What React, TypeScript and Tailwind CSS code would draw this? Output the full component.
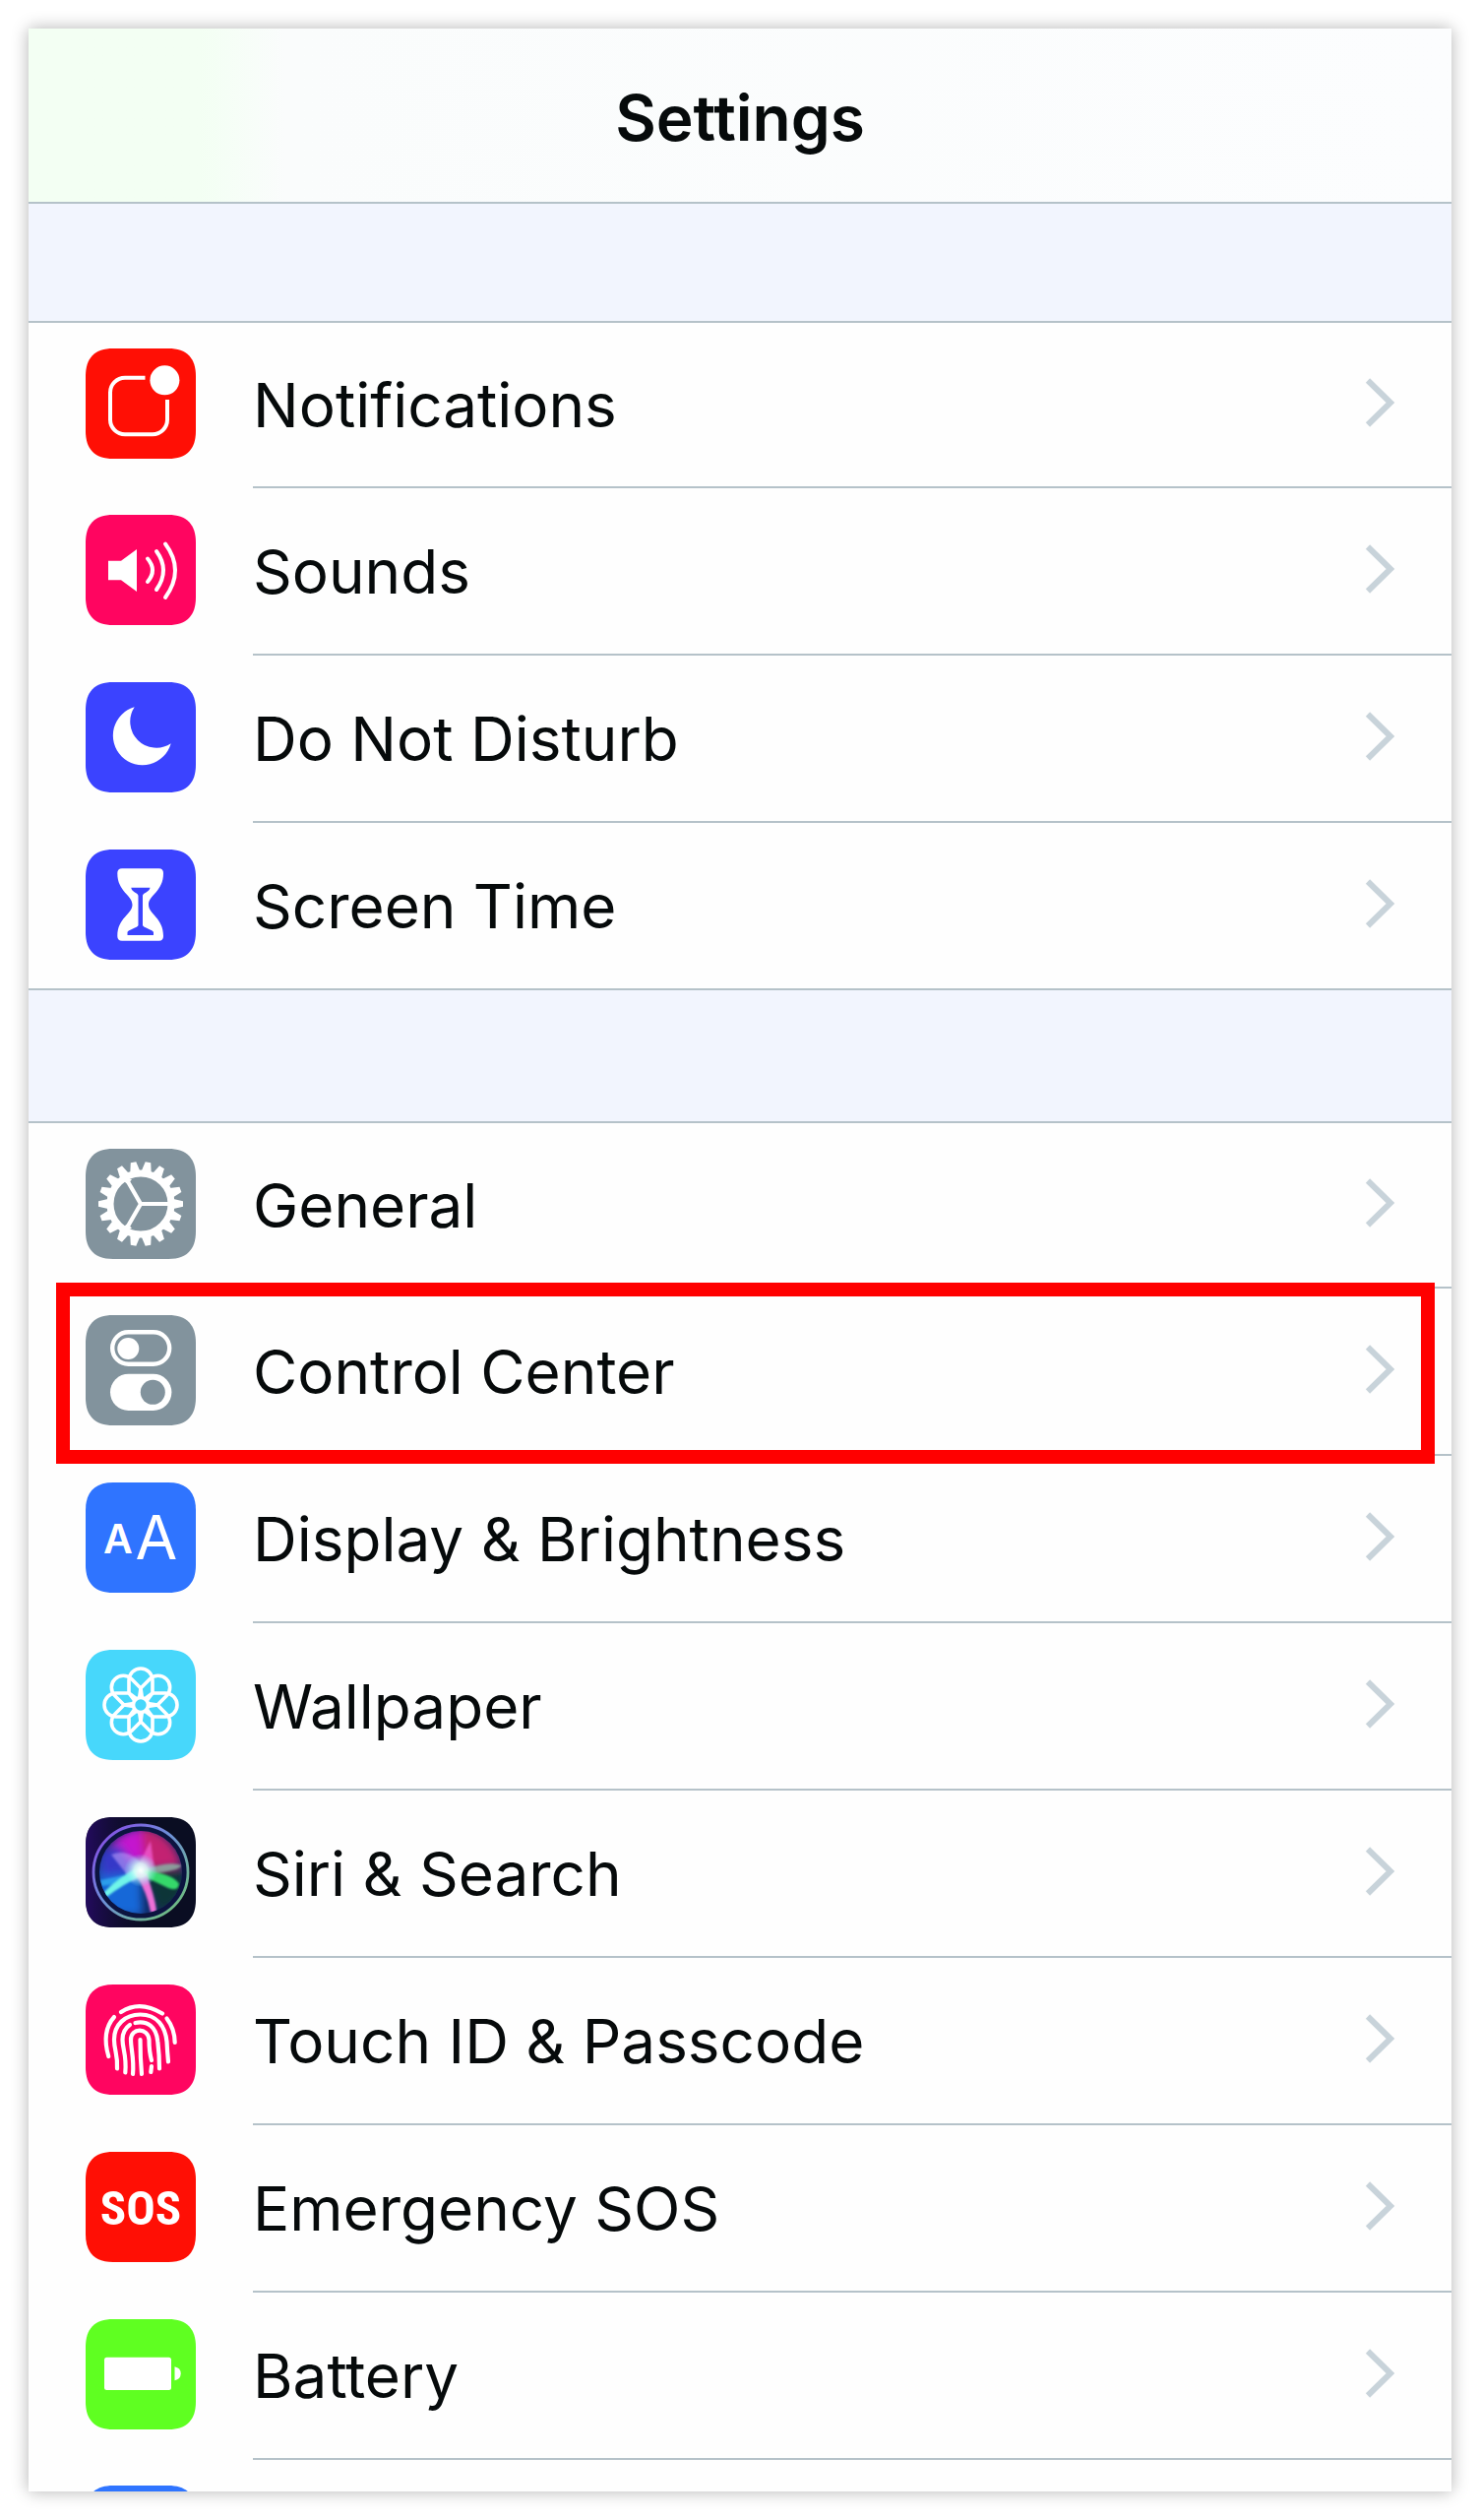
import type { ReactNode } from "react";

type Item = {
  label: string;
  icon: ReactNode;
  highlighted?: boolean;
};

const GEAR_TEETH = Array.from({ length: 18 }, (_, i) => i * 20);
const PETALS = Array.from({ length: 8 }, (_, i) => i * 45);

function Tile({ color, children }: { color: string; children?: ReactNode }) {
  return (
    <svg viewBox="0 0 112 112" className="size-28 shrink-0" aria-hidden="true">
      <path
        fill={color}
        d="M28 0H84C103 0 112 10 112 28V84C112 102 103 112 84 112H28C9 112 0 102 0 84V28C0 10 9 0 28 0Z"
      />
      {children}
    </svg>
  );
}

function NotificationsIcon() {
  return (
    <Tile color="#ff0f05">
      <path
        d="M60.500 29.700H40A15 15 0 0 0 25 44.700V72.300A15 15 0 0 0 40 87.300H68A15 15 0 0 0 83 72.300V52"
        fill="none"
        stroke="#fff"
        strokeWidth="4"
      />
      <circle cx="80.400" cy="32.300" r="15" fill="#fff" />
    </Tile>
  );
}

function SoundsIcon() {
  return (
    <Tile color="#ff0560">
      <path d="M23 46.700H36L52 35V78L36 66.300H23Z" fill="#fff" />
      <g fill="none" stroke="#fff" strokeWidth="4" strokeLinecap="round">
        <path d="M63 44.500Q73 56.200 63 68" />
        <path d="M72 37Q86 56.200 72 76" />
        <path d="M81 29.500Q101 56.200 81 84" />
      </g>
    </Tile>
  );
}

function MoonIcon() {
  return (
    <Tile color="#3b43ff">
      <path d="M49.700 25.300A30 30 0 1 0 86.700 62.300A26.700 26.700 0 0 1 49.700 25.300Z" fill="#fff" />
    </Tile>
  );
}

function HourglassIcon() {
  return (
    <Tile color="#3b43ff">
      <path
        d="M37 19.300H74.500Q79 19.300 79 24C79 43 64 46 64 56C64 66 79 69 79 88Q79 92.700 74.500 92.700H37Q32.300 92.700 32.300 88C32.300 69 47.500 66 47.500 56C47.500 46 32.300 43 32.300 24Q32.300 19.300 37 19.300Z"
        fill="#fff"
      />
      <path
        d="M46.300 38.700H65.500C65 43 58 44 58 47V77C58 79 69 82 69 84V87H42.500V84C42.500 82 53.500 79 53.500 77V47C53.500 44 46.500 43 46.300 38.700Z"
        fill="#3b43ff"
      />
    </Tile>
  );
}

function GearIcon() {
  return (
    <Tile color="#82939d">
      <g transform="translate(56 56)">
        {GEAR_TEETH.map((angle) => (
          <path key={angle} d="M31 -5.500L43 -2.800V2.800L31 5.500Z" fill="#fff" transform={`rotate(${angle})`} />
        ))}
        <circle r="31" fill="none" stroke="#fff" strokeWidth="7" />
        <path d="M0 0H30M0 0L-15 -26M0 0L-15 26" stroke="#fff" strokeWidth="4.200" />
        <path d="M-19 -24L-15 -26L-9 -25L-13 -20ZM-19 24L-15 26L-9 25L-13 20Z" fill="#fff" />
      </g>
    </Tile>
  );
}

function TogglesIcon() {
  return (
    <Tile color="#82939d">
      <rect x="27.200" y="17.200" width="58" height="32.600" rx="16.300" fill="none" stroke="#fff" strokeWidth="4.400" />
      <circle cx="43.300" cy="34" r="11" fill="#fff" />
      <rect x="25" y="59.700" width="62.400" height="37.200" rx="18.600" fill="#fff" />
      <circle cx="68.300" cy="78.300" r="12.500" fill="#82939d" />
    </Tile>
  );
}

function DisplayIcon() {
  return (
    <Tile color="#2f74ff">
      <g fill="#fff" textAnchor="middle" className="font-['Inter','Liberation_Sans',sans-serif]">
        <text x="33" y="72" fontSize="41" fontWeight="600">A</text>
        <text x="72" y="78" fontSize="62" fontWeight="400">A</text>
      </g>
    </Tile>
  );
}

function FlowerIcon() {
  return (
    <Tile color="#47d7fb">
      <g transform="translate(56 56)" fill="none" stroke="#fff" strokeWidth="3.600">
        {PETALS.map((angle) => (
          <path
            key={angle}
            d="M-12 -12V-25A12 12 0 0 1 12 -25V-12L4 -6M-12 -12L-4 -6"
            transform={`rotate(${angle})`}
          />
        ))}
        <circle r="7.500" />
      </g>
    </Tile>
  );
}

function SiriIcon() {
  return (
    <Tile color="#0a0d22">
      <defs>
        <linearGradient id="siri-ring" x1="0" y1="0" x2="1" y2="1">
          <stop offset="0" stopColor="#8a3fe8" />
          <stop offset="0.45" stopColor="#6d8fd8" />
          <stop offset="1" stopColor="#6fc76a" />
        </linearGradient>
        <linearGradient id="siri-edge" x1="0" y1="0" x2="1" y2="0">
          <stop offset="0" stopColor="#2a0a6e" stopOpacity="0.8" />
          <stop offset="0.6" stopColor="#0a0d22" stopOpacity="0" />
        </linearGradient>
        <radialGradient id="siri-core">
          <stop offset="0" stopColor="#fff" />
          <stop offset="0.4" stopColor="#d9fff8" stopOpacity="0.85" />
          <stop offset="1" stopColor="#7fe8ff" stopOpacity="0" />
        </radialGradient>
        <clipPath id="siri-clip">
          <circle cx="56" cy="56" r="42" />
        </clipPath>
        <filter id="siri-soft" x="-30%" y="-30%" width="160%" height="160%">
          <feGaussianBlur stdDeviation="4" />
        </filter>
        <filter id="siri-glow" x="-30%" y="-30%" width="160%" height="160%">
          <feGaussianBlur stdDeviation="1" />
        </filter>
      </defs>
      <path
        fill="url(#siri-edge)"
        d="M28 0H84C103 0 112 10 112 28V84C112 102 103 112 84 112H28C9 112 0 102 0 84V28C0 10 9 0 28 0Z"
      />
      <circle cx="56" cy="56" r="48" fill="#0c1440" />
      <g clipPath="url(#siri-clip)">
        <rect x="14" y="14" width="84" height="84" fill="#122a66" />
        <g filter="url(#siri-soft)">
          <path d="M14 40L56 56L58 100H30L10 80Z" fill="#1767d8" />
          <path d="M24 30Q40 10 62 12L60 52Z" fill="#c416cf" />
          <path d="M56 10Q88 14 98 50L60 54Z" fill="#c32472" />
          <path d="M58 56L100 54V80L76 98Z" fill="#0b3538" />
          <path d="M14 34L34 28L56 56L16 60Z" fill="#3438c8" />
        </g>
        <g filter="url(#siri-glow)">
          <path d="M26 38Q46 30 62 54L48 66Z" fill="#c9a3ff" opacity="0.55" />
          <path d="M66 24L70 54L50 56Z" fill="#ff6be9" opacity="0.6" />
          <path d="M15 64Q34 60 52 56L54 60Q34 68 16 70Z" fill="#35b5f5" opacity="0.7" />
          <path d="M17 78Q34 60 56 50L60 58Q38 68 20 82Z" fill="#6ff5e9" />
          <path d="M58 54Q84 44 98 49Q92 56 62 57Z" fill="#8fb8a8" opacity="0.8" />
          <path d="M60 54Q90 58 95 68Q94 76 84 72Q72 66 58 60Z" fill="#35d86a" />
          <path d="M52 54L62 58Q70 80 72 94Q70 100 66 96Q62 76 52 60Z" fill="#ee6fd8" />
        </g>
        <circle cx="56" cy="54" r="17" fill="url(#siri-core)" />
      </g>
      <circle cx="56" cy="56" r="48" fill="none" stroke="url(#siri-ring)" strokeWidth="2.800" />
    </Tile>
  );
}

function FingerprintIcon() {
  return (
    <Tile color="#ff0560">
      <g fill="none" stroke="#fff" strokeWidth="4.200" strokeLinecap="round">
        <path d="M36 28Q55 15.500 78 29.500" />
        <path d="M29 33C21 42 18 55 23.300 73" />
        <path d="M82.500 34.500Q90.500 45 90.700 59" />
        <path d="M32 85.500C33 72 29 67 29 56C29 41 40 30.500 55.500 30.500C73 30.500 81 43 82.500 58Q83 68 84 78.500" />
        <path d="M40.300 89.500C42 72 37.500 66 37.500 56Q37.500 46 45 41" />
        <path d="M50.500 39C63 36.500 72 43 73.300 58Q75 72 75 85.500" />
        <path d="M48 91C49.500 75 46 66 46 56C46 43.500 63.500 43.500 64.500 56Q64.500 68 67 77" />
        <path d="M67 83L66.300 89" />
        <path d="M55.500 56Q55.500 74 57 91" />
      </g>
    </Tile>
  );
}

function SosIcon() {
  return (
    <Tile color="#ff0f05">
      <text
        x="56"
        y="74"
        fontSize="49"
        fontWeight="700"
        fill="#fff"
        textAnchor="middle"
        className="font-['Roboto_Condensed','Roboto',sans-serif]"
      >
        SOS
      </text>
    </Tile>
  );
}

function BatteryIcon() {
  return (
    <Tile color="#5fff21">
      <rect x="19" y="38.700" width="68" height="33.300" rx="2.500" fill="#fff" />
      <path d="M90.500 48.300Q96.700 49.500 96.700 55.300Q96.700 61 90.500 62.300Z" fill="#fff" />
    </Tile>
  );
}

const alerts: Item[] = [
  { label: "Notifications", icon: <NotificationsIcon /> },
  { label: "Sounds", icon: <SoundsIcon /> },
  { label: "Do Not Disturb", icon: <MoonIcon /> },
  { label: "Screen Time", icon: <HourglassIcon /> },
];

const device: Item[] = [
  { label: "General", icon: <GearIcon /> },
  { label: "Control Center", icon: <TogglesIcon />, highlighted: true },
  { label: "Display & Brightness", icon: <DisplayIcon /> },
  { label: "Wallpaper", icon: <FlowerIcon /> },
  { label: "Siri & Search", icon: <SiriIcon /> },
  { label: "Touch ID & Passcode", icon: <FingerprintIcon /> },
  { label: "Emergency SOS", icon: <SosIcon /> },
  { label: "Battery", icon: <BatteryIcon /> },
];

function Row({ item }: { item: Item }) {
  return (
    <li className="group relative">
      <button
        type="button"
        className="flex h-[170px] w-full cursor-pointer items-center pl-[58px] text-left group-first:h-[168px]"
      >
        <span className="-mt-1">{item.icon}</span>
        <span className="ml-[58px] flex h-full flex-1 items-center justify-between border-b-2 border-[#b5c2c9] pr-[57px]">
          <span className="pt-0.5">{item.label}</span>
          <svg viewBox="0 0 32 52" className="-mt-1 h-[52px] w-8" aria-hidden="true">
            <path d="M4 3.500L27 26L4 48.500" fill="none" stroke="#c8d3da" strokeWidth="6" />
          </svg>
        </span>
      </button>
      {item.highlighted && (
        <div className="pointer-events-none absolute -top-1.5 right-[17px] -bottom-2 left-7 z-10 border-14 border-[#ff0000]" />
      )}
    </li>
  );
}

function Group({ items }: { items: Item[] }) {
  return (
    <ul className="border-t-2 border-[#b5c2c9] bg-[#fefefe]">
      {items.map((item) => (
        <Row key={item.label} item={item} />
      ))}
    </ul>
  );
}

export default function App() {
  return (
    <div className="bg-white p-[29px] font-['Inter','Liberation_Sans',sans-serif] text-[62px] leading-[80px] text-[#060a0b]">
      <main className="overflow-hidden bg-[#f2f5fe] shadow-[0_0_16px_rgba(0,0,0,0.3)]">
        {/* Header */}
        <header className="flex h-[178px] items-center justify-center border-b-2 border-[#b5c2c9] bg-linear-to-r from-[#f3fff3] from-12% via-[#fafcfc] via-18% to-[#fcfdfe] pt-1.5">
          <h1 className="text-[64px] font-semibold">Settings</h1>
        </header>

        <div className="pt-[119px]">
          <Group items={alerts} />
        </div>

        {/* The gap's top line closes the group above it */}
        <div className="-mt-0.5 border-t-2 border-[#b5c2c9] pt-[133px]">
          <Group items={device} />
        </div>

        {/* Next row, cut off by the bottom edge */}
        <div className="h-8 overflow-hidden bg-[#fefefe] pt-[26px] pl-[58px]">
          <Tile color="#2f74ff" />
        </div>
      </main>
    </div>
  );
}
